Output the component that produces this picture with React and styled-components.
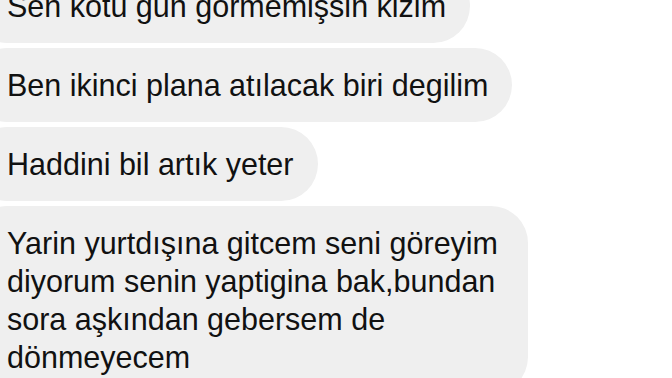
import React from 'react';
import styled, { createGlobalStyle } from 'styled-components';

const GlobalStyle = createGlobalStyle`
  html, body {
    margin: 0;
    padding: 0;
    background: #ffffff;
    overflow: hidden;
  }
`;

const Thread = styled.div`
  display: flex;
  flex-direction: column;
  align-items: flex-start;
  gap: 5px;
  margin-top: -31px;
  margin-left: -30px;
  font-family: "Liberation Sans", Arial, sans-serif;
`;

const Bubble = styled.div`
  background: #efefef;
  color: #111111;
  font-size: 30.5px;
  line-height: 38px;
  padding: 18px ${props => (props.$multi ? '30px' : '24px')} 18px 37px;
  border-radius: 37px;
`;

const messages = [
  { id: 1, text: 'Sen kotu gun gormemişsin kizim' },
  { id: 2, text: 'Ben ikinci plana atılacak biri degilim' },
  { id: 3, text: 'Haddini bil artık yeter' },
  {
    id: 4,
    lines: [
      'Yarin yurtdışına gitcem seni göreyim',
      'diyorum senin yaptigina bak,bundan',
      'sora aşkından gebersem de',
      'dönmeyecem',
    ],
  },
];

const App = () => (
  <>
    <GlobalStyle />
    <Thread>
      {messages.map(m => (
        <Bubble key={m.id} $multi={!!m.lines}>
          {m.lines
            ? m.lines.map((l, i) => <div key={i}>{l}</div>)
            : m.text}
        </Bubble>
      ))}
    </Thread>
  </>
);

export default App;
